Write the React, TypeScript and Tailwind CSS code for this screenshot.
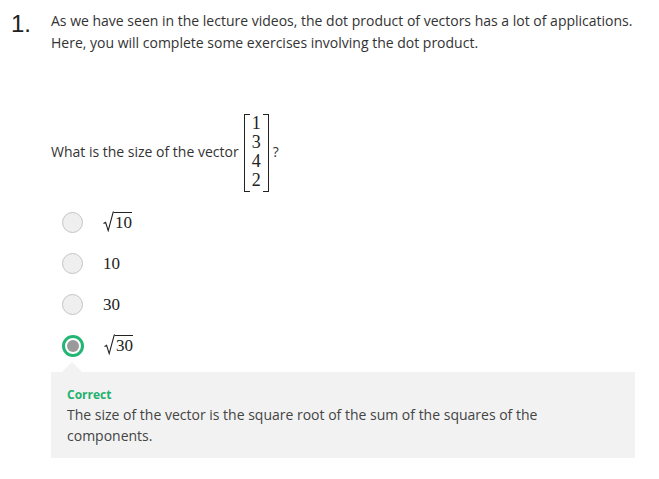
import React from "react";

function Sqrt({ children }: { children: React.ReactNode }) {
  return (
    <span className="inline-flex items-end leading-none">
      <svg width="11" height="21" viewBox="0 0 11 21" className="block">
        <path d="M0.5 12.6 L2.6 11.4 L5.2 19.6 L10.2 1 L11 1" fill="none" stroke="#222" strokeWidth="1.1" />
      </svg>
      <span className="border-t border-[#222] pt-[1px] pl-[1px] leading-[18px]">{children}</span>
    </span>
  );
}

function Radio({ selected }: { selected?: boolean }) {
  if (selected) {
    return (
      <span className="flex h-[22px] w-[22px] items-center justify-center rounded-full border-[3px] border-[#22b573] bg-white">
        <span className="h-[12px] w-[12px] rounded-full bg-[#9a9a9a]" />
      </span>
    );
  }
  return <span className="block h-[21px] w-[21px] rounded-full border border-[#c4c4c4] bg-[#efefef]" />;
}

export default function App() {
  const serif = { fontFamily: '"Liberation Serif", "DejaVu Serif", serif' };
  const options: { label: React.ReactNode; selected?: boolean }[] = [
    { label: <Sqrt>10</Sqrt> },
    { label: "10" },
    { label: "30" },
    { label: <Sqrt>30</Sqrt>, selected: true },
  ];
  return (
    <div className="h-[479px] w-[659px] bg-white text-[#333]" style={{ fontFamily: '"Open Sans", sans-serif' }}>
      <div className="flex pt-[10px]">
        <div className="w-[51px] pl-[11px] text-[24px] leading-[28px] text-[#222]" style={{ fontFamily: '"Liberation Sans", Arial, sans-serif' }}>
          1.
        </div>
        <div className="text-[14px] leading-[22px]">
          <p>As we have seen in the lecture videos, the dot product of vectors has a lot of applications.</p>
          <p>Here, you will complete some exercises involving the dot product.</p>
        </div>
      </div>

      <div className="ml-[51px] mt-[60px] flex items-center text-[14px]">
        <span className="mb-[3px]">What is the size of the vector</span>
        <span className="ml-[5px] flex items-stretch" style={serif}>
          <span className="w-[6px] border-y border-l border-[#222]" />
          <span className="flex flex-col items-center px-[2px] pb-[2px] pt-0 text-[18px] leading-[19px] text-[#222]">
            <span>1</span>
            <span>3</span>
            <span>4</span>
            <span>2</span>
          </span>
          <span className="w-[6px] border-y border-r border-[#222]" />
        </span>
        <span className="mb-[3px] ml-[4px]">?</span>
      </div>

      <div className="ml-[62px] mt-[20px] flex flex-col gap-[20px]">
        {options.map((o, i) => (
          <div key={i} className="flex h-[21px] items-center">
            <Radio selected={o.selected} />
            <span className="ml-[20px] text-[17px] leading-none text-[#222]" style={serif}>
              {o.label}
            </span>
          </div>
        ))}
      </div>

      <div className="relative ml-[51px] mt-[16px] w-[584px] bg-[#f2f2f2] px-[16px] pb-[12px] pt-[14px]">
        <span className="absolute left-[11px] top-[-10px] h-0 w-0 border-x-[10px] border-b-[10px] border-x-transparent border-b-[#f2f2f2]" />
        <div className="text-[12px] font-bold leading-[18px] text-[#1fb16e]">Correct</div>
        <div className="text-[14px] leading-[21px] text-[#444]">
          The size of the vector is the square root of the sum of the squares of the
          <br />
          components.
        </div>
      </div>
    </div>
  );
}
